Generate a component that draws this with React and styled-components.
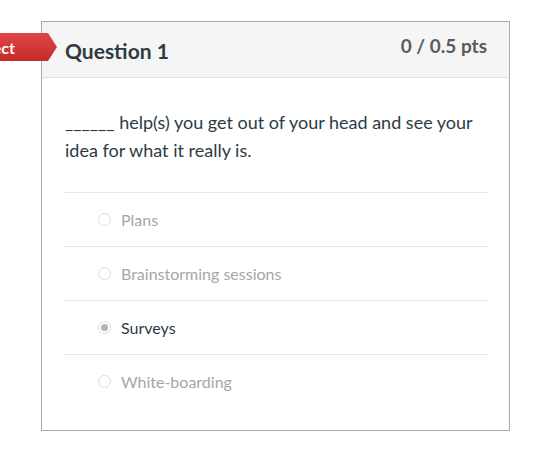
import React from 'react';
import styled, { createGlobalStyle } from 'styled-components';

const GlobalStyle = createGlobalStyle`
  html, body {
    margin: 0;
    padding: 0;
    background: #fff;
    font-family: Lato, "Open Sans", sans-serif;
    overflow: hidden;
  }
`;

const Page = styled.div`
  padding: 21px 0 0 41px;
`;

const Card = styled.div`
  position: relative;
  width: 467px;
  height: 408px;
  border: 1px solid #aaaaaa;
  box-sizing: content-box;
`;

const ResultTab = styled.div`
  position: absolute;
  top: 11px;
  right: 452px;
  height: 28px;
  display: flex;
  align-items: center;
  justify-content: flex-end;
  color: #fff;
  font-weight: 700;
  font-size: 16px;
  background: linear-gradient(#e04645, #c42a2a);
  padding: 0 42px 0 12px;
  clip-path: polygon(0 0, calc(100% - 9px) 0, 100% 50%, calc(100% - 9px) 100%, 0 100%);
`;

const Header = styled.div`
  display: flex;
  justify-content: space-between;
  align-items: flex-start;
  height: 55px;
  padding: 0 22px 0 23px;
  background: #f5f5f5;
  border-bottom: 1px solid #e0e0e0;
`;

const Title = styled.h2`
  margin: 16px 0 0;
  font-size: 21px;
  font-weight: 700;
  color: #2d3b45;
`;

const Points = styled.div`
  margin-top: 12px;
  font-size: 19px;
  font-weight: 700;
  color: #5b5b5b;
`;

const Body = styled.div`
  padding: 30px 22px 0 23px;
`;

const QuestionText = styled.p`
  margin: 0 0 28px;
  font-size: 18px;
  line-height: 28px;
  color: #2d3b45;
`;

const AnswerList = styled.div`
  display: flex;
  flex-direction: column;
`;

const Answer = styled.div`
  display: flex;
  align-items: center;
  gap: 10px;
  height: 53px;
  padding-left: 33px;
  border-top: 1px solid #e6e6e6;
  font-size: 16px;
  color: ${p => (p.$selected ? '#2d3b45' : '#a3a7ab')};
`;

const Radio = styled.span`
  position: relative;
  width: 11px;
  height: 11px;
  border-radius: 50%;
  border: 1px solid #dcdcdc;
  background: #fff;
  flex-shrink: 0;
  &::after {
    content: '';
    display: ${p => (p.$checked ? 'block' : 'none')};
    position: absolute;
    inset: 2px;
    border-radius: 50%;
    background: #b3b3b3;
  }
`;

const answers = [
  { text: 'Plans' },
  { text: 'Brainstorming sessions' },
  { text: 'Surveys', selected: true },
  { text: 'White-boarding' },
];

export default function App() {
  return (
    <>
      <GlobalStyle />
      <Page>
        <Card>
          <ResultTab>Incorrect</ResultTab>
          <Header>
            <Title>Question 1</Title>
            <Points>0 / 0.5 pts</Points>
          </Header>
          <Body>
            <QuestionText>
              ______ help(s) you get out of your head and see your idea for what it really is.
            </QuestionText>
            <AnswerList>
              {answers.map(a => (
                <Answer key={a.text} $selected={a.selected}>
                  <Radio $checked={a.selected} />
                  {a.text}
                </Answer>
              ))}
            </AnswerList>
          </Body>
        </Card>
      </Page>
    </>
  );
}
